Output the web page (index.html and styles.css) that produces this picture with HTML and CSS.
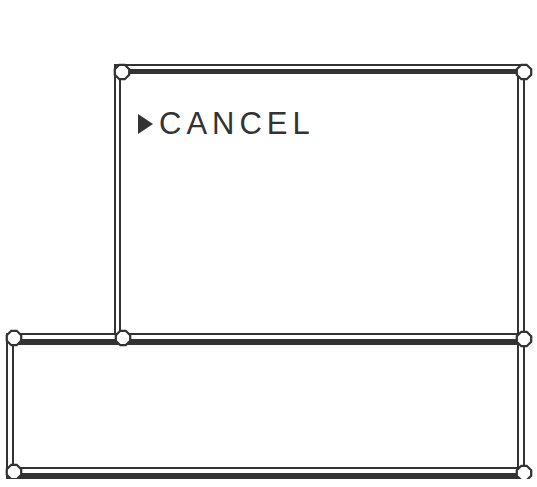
FILE: index.html
```html
<!DOCTYPE html>
<html lang="en">
<head>
    <meta charset="UTF-8">
    <meta name="viewport" content="width=device-width, initial-scale=1.0">
    <title>Menu</title>
    <link rel="stylesheet" href="styles.css">
</head>
<body>
    <div class="screen">
        <div class="window menu">
            <div class="frame">
                <div class="option">
                    <span class="cursor"></span>
                    <span class="label">CANCEL</span>
                </div>
            </div>
            <svg class="knob knob-menu-left" viewBox="0 0 20 20"><path d="M7 2h6l5 5v6l-5 5H7l-5-5V7z"/></svg>
            <svg class="knob knob-menu-right" viewBox="0 0 20 20"><path d="M7 2h6l5 5v6l-5 5H7l-5-5V7z"/></svg>
        </div>
        <div class="window message">
            <div class="frame"></div>
            <svg class="knob knob-tl" viewBox="0 0 20 20"><path d="M7 2h6l5 5v6l-5 5H7l-5-5V7z"/></svg>
            <svg class="knob knob-tm" viewBox="0 0 20 20"><path d="M7 2h6l5 5v6l-5 5H7l-5-5V7z"/></svg>
            <svg class="knob knob-tr" viewBox="0 0 20 20"><path d="M7 2h6l5 5v6l-5 5H7l-5-5V7z"/></svg>
            <svg class="knob knob-bl" viewBox="0 0 20 20"><path d="M7 2h6l5 5v6l-5 5H7l-5-5V7z"/></svg>
            <svg class="knob knob-br" viewBox="0 0 20 20"><path d="M7 2h6l5 5v6l-5 5H7l-5-5V7z"/></svg>
        </div>
    </div>
</body>
</html>
```

FILE: styles.css
```css
body {
    margin: 0;
    padding: 0;
    background-color: #fff;
    font-family: "Liberation Sans", Arial, sans-serif;
    color: #333;
}
.screen {
    padding-top: 64px;
}
.window {
    position: relative;
    box-sizing: border-box;
    border: 2px solid #333;
}
.frame {
    box-sizing: border-box;
    border: 2px solid #333;
    height: 100%;
}
.menu {
    margin-left: 114px;
    width: 411px;
    height: 269px;
    border-bottom: none;
    padding: 3px 4px 0 3px;
}
.menu .frame {
    border-top-width: 5px;
    border-bottom: none;
    padding: 34px 0 0 17px;
}
.message {
    margin-left: 6px;
    width: 519px;
    height: 146px;
    border-bottom-width: 6px;
    padding: 4px;
}
.message .frame {
    border-top-width: 6px;
}
.option {
    display: flex;
    align-items: center;
    gap: 6px;
}
.cursor {
    width: 0;
    height: 0;
    border-left: 15px solid #333;
    border-top: 10px solid transparent;
    border-bottom: 10px solid transparent;
}
.label {
    font-size: 31px;
    line-height: 31px;
    letter-spacing: 5px;
}
.knob {
    position: absolute;
    width: 18px;
    height: 18px;
}
.knob path {
    fill: #fff;
    stroke: #333;
    stroke-width: 2.5;
}
.knob-menu-left { left: -3px; top: -3px; }
.knob-menu-right { left: 399px; top: -3px; }
.knob-tl { left: -3px; top: -6px; }
.knob-tm { left: 106px; top: -6px; }
.knob-tr { left: 507px; top: -5px; }
.knob-bl { left: -3px; top: 128px; }
.knob-br { left: 507px; top: 129px; }
```
